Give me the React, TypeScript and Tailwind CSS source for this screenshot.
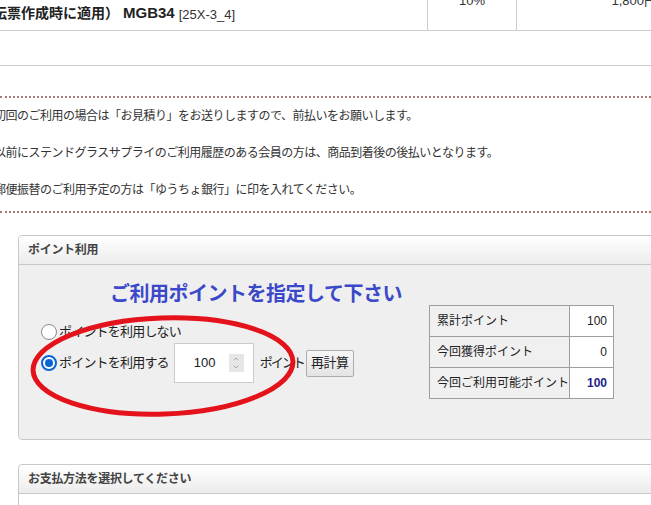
import { ChevronDown, ChevronUp } from "lucide-react";

type PointRow = {
  label: string;
  value: string;
  strong?: boolean;
};

const pointRows: PointRow[] = [
  { label: "累計ポイント", value: "100" },
  { label: "今回獲得ポイント", value: "0" },
  { label: "今回ご利用可能ポイント", value: "100", strong: true },
];

const notes = [
  "初回のご利用の場合は「お見積り」をお送りしますので、前払いをお願いします。",
  "以前にステンドグラスサプライのご利用履歴のある会員の方は、商品到着後の後払いとなります。",
  "郵便振替のご利用予定の方は「ゆうちょ銀行」に印を入れてください。",
];

function Radio({ checked }: { checked?: boolean }) {
  if (checked)
    return (
      <span className="flex items-center justify-center w-[16px] h-[16px] rounded-full border-2 border-[#0a64d6] bg-white">
        <span className="w-[8px] h-[8px] rounded-full bg-[#0a64d6]" />
      </span>
    );
  return (
    <span className="w-[16px] h-[16px] rounded-full border border-[#8a8a8a] bg-white" />
  );
}

function PanelHeader({ title }: { title: string }) {
  return (
    <div className="h-[29px] flex items-center pl-[9px] border-b border-[#c8c8c8] bg-gradient-to-b from-white to-[#ececec] rounded-t-[4px]">
      <span className="text-[12px] font-bold text-[#444] tracking-[-0.3px]">{title}</span>
    </div>
  );
}

export default function App() {
  return (
    <div className="relative w-[651px] h-[505px] overflow-hidden bg-white text-[#333] font-['Liberation_Sans','Noto_Sans_CJK_JP',sans-serif]">
      {/* ORDER ROW (cut at top) */}
      <div className="flex h-[31px] border-b border-[#cccccc]">
        <div className="w-[427px] flex items-end pb-[6px] whitespace-nowrap">
          <span className="ml-[-7px] text-[14px] font-bold text-[#222]">
            伝票作成時に適用）
          </span>
          <span className="ml-[4px] text-[15px] font-bold text-[#222]">MGB34</span>
          <span className="ml-[4px] text-[13px] text-[#333]">[25X-3_4]</span>
        </div>
        <div className="w-[89px] border-l border-[#cccccc] text-center text-[13px] leading-none mt-[-6px]">
          10%
        </div>
        <div className="flex-1 border-l border-[#cccccc] flex justify-end text-[13px] leading-none mt-[-6px] whitespace-nowrap">
          <span className="mr-[-6px]">1,800円</span>
        </div>
      </div>
      <div className="h-[35px] border-b border-[#cccccc]" />

      {/* NOTES */}
      <div className="mt-[30px] border-t-2 border-dotted border-[#a87878]" />
      <div className="flex flex-col text-[12px] text-[#333] whitespace-nowrap tracking-[-0.5px]">
        {notes.map((note, i) => (
          <p key={i} className="h-[37px] leading-[37px] ml-[-6px]">
            {note}
          </p>
        ))}
      </div>
      <div className="mt-[2px] border-t-2 border-dotted border-[#a87878]" />

      {/* POINT PANEL */}
      <div className="ml-[18px] mt-[22px] w-[700px] border border-[#c8c8c8] rounded-[4px]">
        <PanelHeader title="ポイント利用" />
        <div className="flex h-[174px] bg-[#efefef] rounded-b-[4px]">
          <div className="w-[410px] flex flex-col">
            <h2 className="mt-[16px] pl-[91px] h-[26px] leading-[26px] text-[20px] font-bold text-[#3a48c9] whitespace-nowrap tracking-[-0.5px]">
              ご利用ポイントを指定して下さい
            </h2>
            <label className="mt-[15px] h-[20px] flex items-center pl-[22px] text-[13px] text-[#222] tracking-[-0.8px]">
              <Radio />
              <span className="ml-[2px]">ポイントを利用しない</span>
            </label>
            <div className="mt-[1px] h-[40px] flex items-center pl-[22px] text-[13px] text-[#222] whitespace-nowrap">
              <Radio checked />
              <span className="ml-[2px] tracking-[-0.8px]">ポイントを利用する</span>
              <div className="ml-[5px] w-[80px] h-[40px] flex items-center bg-white border border-[#cccccc]">
                <span className="ml-[19px] w-[34px] text-[13px]">100</span>
                <span className="ml-[1px] w-[15px] h-[18px] flex flex-col items-center justify-center bg-[#e6e6e6] text-[#8a8a8a]">
                  <ChevronUp size={8} strokeWidth={2} />
                  <ChevronDown size={8} strokeWidth={2} />
                </span>
              </div>
              <span className="ml-[6px] tracking-[-2px]">ポイント</span>
              <button className="ml-[2px] w-[48px] h-[27px] border border-[#adadad] rounded-[2px] bg-gradient-to-b from-[#f6f6f6] to-[#e4e4e4] text-[13px] text-[#222] tracking-[-0.5px]">
                再計算
              </button>
            </div>
          </div>
          <table className="mt-[40px] self-start border-collapse text-[12px] text-[#222]">
            <tbody>
              {pointRows.map((row) => (
                <tr key={row.label} className="h-[31px]">
                  <td className="w-[140px] pl-[7px] border border-[#9e9e9e] bg-[#f0f0f0] whitespace-nowrap">
                    {row.label}
                  </td>
                  <td
                    className={
                      row.strong
                        ? "w-[44px] pr-[6px] text-right border border-[#9e9e9e] bg-white font-bold text-[#1c1f8c]"
                        : "w-[44px] pr-[6px] text-right border border-[#9e9e9e] bg-white"
                    }
                  >
                    {row.value}
                  </td>
                </tr>
              ))}
            </tbody>
          </table>
        </div>
      </div>

      {/* PAYMENT PANEL */}
      <div className="ml-[18px] mt-[24px] w-[700px] h-[60px] border border-[#c8c8c8] rounded-[4px] bg-white">
        <PanelHeader title="お支払方法を選択してください" />
      </div>

      {/* RED MARKER */}
      <svg
        className="absolute left-[28px] top-[313px]"
        width="270"
        height="108"
        viewBox="0 0 270 108"
      >
        <ellipse
          cx="135"
          cy="53"
          rx="130"
          ry="48"
          fill="none"
          stroke="#e3121b"
          strokeWidth="5"
          transform="rotate(-2 135 53)"
        />
      </svg>
    </div>
  );
}
